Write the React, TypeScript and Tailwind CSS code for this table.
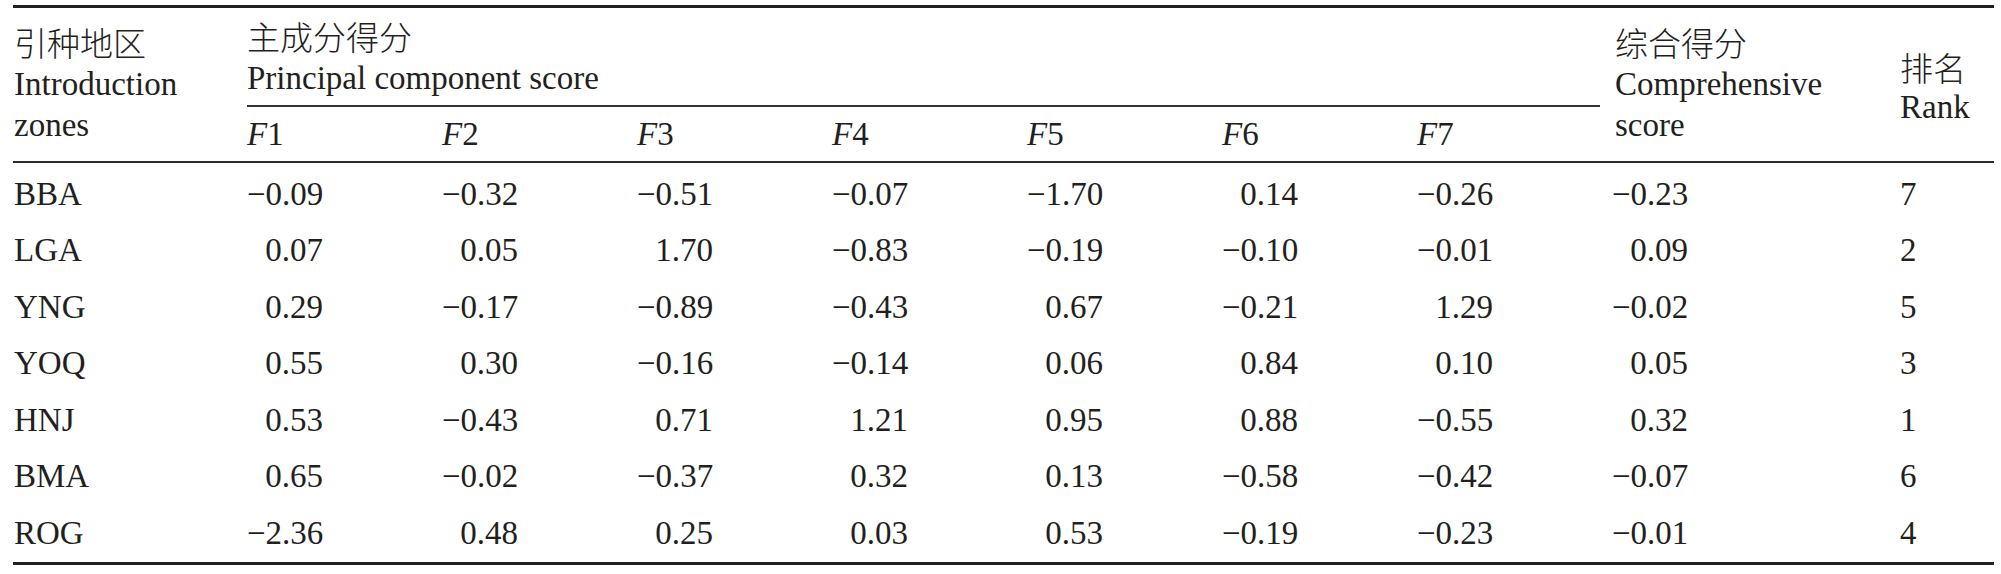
const FONT = { fontFamily: '"Liberation Serif", "Noto Sans CJK SC", serif' };

type Row = { zone: string; f: string[]; score: string; rank: string };

const ROWS: Row[] = [
  { zone: 'BBA', f: ['−0.09', '−0.32', '−0.51', '−0.07', '−1.70', '0.14', '−0.26'], score: '−0.23', rank: '7' },
  { zone: 'LGA', f: ['0.07', '0.05', '1.70', '−0.83', '−0.19', '−0.10', '−0.01'], score: '0.09', rank: '2' },
  { zone: 'YNG', f: ['0.29', '−0.17', '−0.89', '−0.43', '0.67', '−0.21', '1.29'], score: '−0.02', rank: '5' },
  { zone: 'YOQ', f: ['0.55', '0.30', '−0.16', '−0.14', '0.06', '0.84', '0.10'], score: '0.05', rank: '3' },
  { zone: 'HNJ', f: ['0.53', '−0.43', '0.71', '1.21', '0.95', '0.88', '−0.55'], score: '0.32', rank: '1' },
  { zone: 'BMA', f: ['0.65', '−0.02', '−0.37', '0.32', '0.13', '−0.58', '−0.42'], score: '−0.07', rank: '6' },
  { zone: 'ROG', f: ['−2.36', '0.48', '0.25', '0.03', '0.53', '−0.19', '−0.23'], score: '−0.01', rank: '4' },
];

const COLS = 'grid grid-cols-[234px_repeat(7,195px)_288px_94px]';
const F_COL = ['col-start-2', 'col-start-3', 'col-start-4', 'col-start-5', 'col-start-6', 'col-start-7', 'col-start-8'];

export default function App() {
  return (
    <div className="w-[2001px] h-[574px] bg-white text-[#231f20] text-[33px]" style={FONT}>
      <div className="ml-[13px] mt-[5px] w-[1981px] border-t-[3px] border-b-[3px] border-[#231f20]">
        {/* 表头 */}
        <div className={`${COLS} grid-rows-[99px_54px] border-b-2 border-[#2b2b2b]`}>
          <div className="col-start-1 row-start-1 row-span-2 flex flex-col justify-center pl-[1px] leading-[41.5px]">
            <span className="font-light translate-y-[3px]">引种地区</span>
            <span>Introduction</span>
            <span>zones</span>
          </div>
          <div className="col-start-2 col-span-7 row-start-1 flex flex-col justify-center mr-[12px] border-b-2 border-[#333] leading-[42px]">
            <span className="font-light translate-y-[3px]">主成分得分</span>
            <span>Principal component score</span>
          </div>
          {[1, 2, 3, 4, 5, 6, 7].map((n, i) => (
            <div key={n} className={`row-start-2 flex items-center pt-[1px] ${F_COL[i]}`}>
              <span>
                <i>F</i>
                {n}
              </span>
            </div>
          ))}
          <div className="col-start-9 row-start-1 row-span-2 flex flex-col justify-center pl-[3px] leading-[41.5px]">
            <span className="font-light translate-y-[3px]">综合得分</span>
            <span>Comprehensive</span>
            <span>score</span>
          </div>
          <div className="col-start-10 row-start-1 row-span-2 flex flex-col justify-center pt-[4px] leading-[41.5px]">
            <span className="font-light translate-y-[5px]">排名</span>
            <span>Rank</span>
          </div>
        </div>

        {/* 数据行 */}
        <div className="pt-[3px]">
          {ROWS.map((r) => (
            <div key={r.zone} className={`${COLS} h-[56.5px] items-center`}>
              <div className="pl-[1px]">{r.zone}</div>
              {r.f.map((v, i) => (
                <div key={i}>
                  <div className="w-[76px] text-right">{v}</div>
                </div>
              ))}
              <div>
                <div className="w-[76px] text-right">{r.score}</div>
              </div>
              <div>{r.rank}</div>
            </div>
          ))}
        </div>
      </div>
    </div>
  );
}
